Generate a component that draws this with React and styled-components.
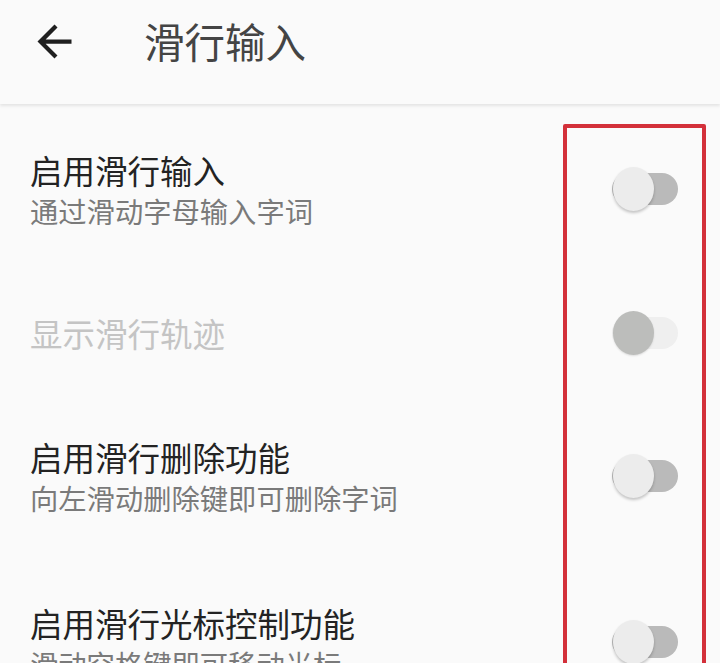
import React from "react";
import styled, { createGlobalStyle } from "styled-components";

const Global = createGlobalStyle`
  html, body { margin: 0; padding: 0; background: #fafafa; }
  body { font-family: "Noto Sans CJK SC", "Noto Sans", sans-serif; }
`;

const Page = styled.div`
  position: relative;
  width: 720px;
  height: 663px;
  overflow: hidden;
  background: #fafafa;
`;

const Header = styled.header`
  height: 104px;
  box-sizing: border-box;
  padding: 0 0 22px 28px;
  display: flex;
  align-items: center;
  background: #fafafa;
  box-shadow: 0 2px 3px rgba(0, 0, 0, 0.09);
  position: relative;
  z-index: 1;
`;

const BackButton = styled.button`
  width: 52px;
  height: 52px;
  padding: 0;
  border: 0;
  background: none;
  display: flex;
  align-items: center;
  justify-content: center;
  color: #1f1f1f;
`;

const Title = styled.h1`
  margin: 0 0 0 64px;
  font-size: 40.5px;
  font-weight: 400;
  color: #444;
  line-height: 1;
`;

const List = styled.div`
  padding-top: 2px;
`;

const Row = styled.div`
  height: ${(p) => (p.$twoLine ? 166 : 121)}px;
  box-sizing: border-box;
  padding: 0 42px 0 30px;
  display: flex;
  align-items: center;
  justify-content: space-between;
`;

const Texts = styled.div`
  display: flex;
  flex-direction: column;
`;

const RowTitle = styled.div`
  font-size: 32.5px;
  line-height: 43px;
  color: ${(p) => (p.$disabled ? "#c4c4c4" : "#232323")};
`;

const RowSummary = styled.div`
  font-size: 28.3px;
  line-height: 39px;
  color: #7a7a7a;
`;

const Switch = styled.div`
  position: relative;
  width: 66px;
  height: 44px;
  display: flex;
  align-items: center;
`;

const Track = styled.div`
  width: 66px;
  height: 32px;
  border-radius: 16px;
  background: ${(p) => (p.$disabled ? "#efefef" : "#bababa")};
`;

const Thumb = styled.div`
  position: absolute;
  left: 1px;
  top: 0;
  width: 41px;
  height: 44px;
  border-radius: 50%;
  background: ${(p) => (p.$disabled ? "#bcbdbb" : "#ececec")};
  box-shadow: ${(p) =>
    p.$disabled ? "0 1px 2px rgba(0,0,0,0.12)" : "0 2px 3px rgba(0,0,0,0.22)"};
`;

const Annotation = styled.div`
  position: absolute;
  left: 563px;
  top: 124px;
  width: 143px;
  height: 620px;
  box-sizing: border-box;
  border: 4px solid #d3303a;
  border-radius: 2px;
  pointer-events: none;
`;

const items = [
  { title: "启用滑行输入", summary: "通过滑动字母输入字词" },
  { title: "显示滑行轨迹", disabled: true },
  { title: "启用滑行删除功能", summary: "向左滑动删除键即可删除字词" },
  { title: "启用滑行光标控制功能", summary: "滑动空格键即可移动光标" },
];

function Toggle({ disabled }) {
  return (
    <Switch>
      <Track $disabled={disabled} />
      <Thumb $disabled={disabled} />
    </Switch>
  );
}

export default function App() {
  return (
    <Page>
      <Global />
      <Header>
        <BackButton aria-label="返回">
          <svg width="51" height="51" viewBox="0 0 24 24" fill="currentColor">
            <path d="M20 11H7.83l5.59-5.59L12 4l-8 8 8 8 1.41-1.41L7.83 13H20v-2z" />
          </svg>
        </BackButton>
        <Title>滑行输入</Title>
      </Header>
      <List>
        {items.map((it) => (
          <Row key={it.title} $twoLine={!!it.summary}>
            <Texts>
              <RowTitle $disabled={it.disabled}>{it.title}</RowTitle>
              {it.summary && <RowSummary>{it.summary}</RowSummary>}
            </Texts>
            <Toggle disabled={it.disabled} />
          </Row>
        ))}
      </List>
      <Annotation />
    </Page>
  );
}
